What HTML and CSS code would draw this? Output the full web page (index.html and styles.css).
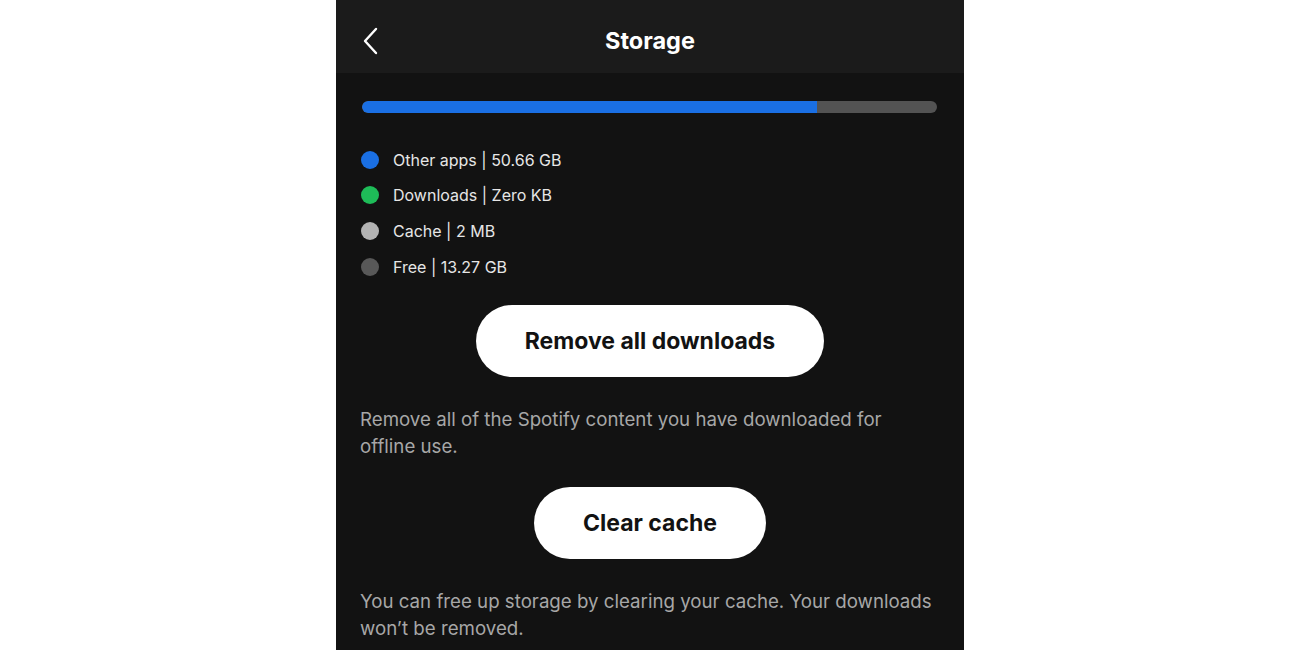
FILE: index.html
```html
<!DOCTYPE html>
<html lang="en">
<head>
    <meta charset="UTF-8">
    <meta name="viewport" content="width=device-width, initial-scale=1.0">
    <title>Storage</title>
    <link rel="stylesheet" href="styles.css">
</head>
<body>

    <div class="phone">
        <header class="topbar">
            <button class="back-btn" aria-label="Back">
                <svg width="18" height="28" viewBox="0 0 18 28">
                    <path d="M15 2 L4 14 L15 26" fill="none" stroke="#fff" stroke-width="2.4" stroke-linecap="round" stroke-linejoin="round"/>
                </svg>
            </button>
            <h1 class="title">Storage</h1>
        </header>

        <main class="content">
            <div class="bar">
                <div class="bar-used" style="width: 79.1%"></div>
            </div>

            <ul class="legend">
                <li><span class="dot dot-blue"></span>Other apps | 50.66 GB</li>
                <li><span class="dot dot-green"></span>Downloads | Zero KB</li>
                <li><span class="dot dot-light"></span>Cache | 2 MB</li>
                <li><span class="dot dot-dark"></span>Free | 13.27 GB</li>
            </ul>

            <div class="action">
                <button class="pill-btn">Remove all downloads</button>
            </div>
            <p class="desc">Remove all of the Spotify content you have downloaded for<br>offline use.</p>

            <div class="action action-next">
                <button class="pill-btn">Clear cache</button>
            </div>
            <p class="desc">You can free up storage by clearing your cache. Your downloads won’t be removed.</p>
        </main>
    </div>

</body>
</html>
```

FILE: styles.css
```css
body {
    margin: 0;
    background-color: #fff;
    font-family: Inter, "Open Sans", Arial, sans-serif;
    height: 650px;
    overflow: hidden;
}
.phone {
    width: 628px;
    margin: 0 auto 0 336px;
    height: 650px;
    background-color: #121212;
    color: #fff;
}
.topbar {
    height: 73px;
    padding-top: 8px;
    box-sizing: border-box;
    background-color: #1b1b1b;
    display: flex;
    align-items: center;
    justify-content: center;
    position: relative;
}
.back-btn {
    position: absolute;
    left: 25px;
    top: 27px;
    background: none;
    border: none;
    padding: 0;
    cursor: pointer;
}
.title {
    margin: 0;
    font-size: 23.5px;
    font-weight: 700;
}
.content {
    padding: 28px 27px 0 24px;
}
.bar {
    height: 12px;
    border-radius: 6px;
    background-color: #535353;
    overflow: hidden;
    margin-left: 2px;
}
.bar-used {
    height: 100%;
    background-color: #1a6fe3;
    border-radius: 6px 0 0 6px;
}
.legend {
    list-style: none;
    margin: 29px 0 0;
    padding: 0;
}
.legend li {
    display: flex;
    align-items: center;
    height: 35.6px;
    font-size: 16px;
    color: #e6e6e6;
}
.dot {
    width: 18px;
    height: 18px;
    border-radius: 50%;
    margin: 0 14px 0 1px;
}
.dot-blue { background-color: #1a6fe3; }
.dot-green { background-color: #1ebc58; }
.dot-light { background-color: #b3b3b3; }
.dot-dark { background-color: #585858; }
.action {
    display: flex;
    justify-content: center;
    margin-top: 21px;
    padding-left: 3px;
}
.action-next {
    margin-top: 27px;
}
.pill-btn {
    height: 72px;
    padding: 0 49px;
    border: none;
    border-radius: 36px;
    background-color: #fff;
    color: #121212;
    font-family: inherit;
    font-size: 23px;
    font-weight: 700;
    cursor: pointer;
}
.desc {
    margin: 29px 0 0;
    font-size: 18.7px;
    line-height: 27px;
    color: #a7a7a7;
}
```
